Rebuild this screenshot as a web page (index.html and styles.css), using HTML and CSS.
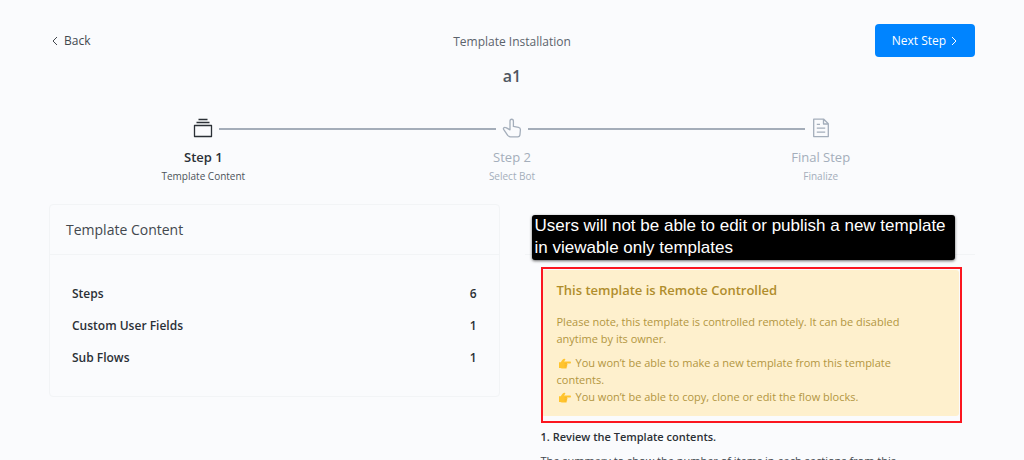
FILE: index.html
```html
<!DOCTYPE html>
<html lang="en">
<head>
<meta charset="utf-8">
<title>Template Installation</title>
<link rel="stylesheet" href="styles.css">
</head>
<body>
<svg class="defs" aria-hidden="true">
  <symbol id="point" viewBox="0 0 12 12">
    <path fill="#ffc42e" d="M0 4.2h1.8C2.8 2.4 4.2 1 5.4.8c.9-.1 1.2.8.6 1.5L5 3.5h6c1.300 0 1.300 2 0 2H7.800c1 .3.9 1.700 0 1.800.8.4.6 1.600-.3 1.700.5.7.1 1.600-.8 1.600H3.600C2.500 10.600 2 9.900 0 9.900z"/>
    <path fill="none" stroke="#e99a1f" stroke-width=".3" d="M7.800 5.600H5.600M7.800 7.300H5.600M7.400 9H5.600"/>
  </symbol>
</svg>
<main class="page">
  <header class="top">
    <a class="back" href="#"><svg class="chevron" viewBox="0 0 8 10"><path d="M6 1 2 5l4 4"/></svg>Back</a>
    <div class="heading">
      <p class="eyebrow">Template Installation</p>
      <h1 class="name">a1</h1>
    </div>
    <button class="next" type="button">Next Step<svg class="chevron" viewBox="0 0 8 10"><path d="m2 1 4 4-4 4"/></svg></button>
  </header>

  <ol class="steps">
    <li class="step current">
      <svg class="step-icon" viewBox="0 0 20 20"><path d="M1.500 7.500h17v11h-17zM3.500 4.500h13M5.500 1.500h9"/></svg>
      <span class="step-name">Step 1</span>
      <span class="step-note">Template Content</span>
    </li>
    <li class="step">
      <svg class="step-icon" viewBox="0 0 20 20"><path d="M8 11.800V3.200C8 .6 11.400.6 11.400 3.200v5.200l5.100.9c1.500.3 2 1.100 1.900 2.400l-.4 4.800c-.1 1.400-.9 2.300-2.300 2.300H8.500c-1.200 0-2-.4-2.800-1.400l-3.900-5.700c-1.100-1.700.6-3 2.200-2z"/></svg>
      <span class="step-name">Step 2</span>
      <span class="step-note">Select Bot</span>
    </li>
    <li class="step">
      <svg class="step-icon" viewBox="0 0 20 20"><path d="M2.700 1.200h10.100l4.500 4.500v12.900H2.700zM12.500 1.500v4.500H17M5.800 6.300H9M5.800 10.200h8.400M5.800 14.200h8.400"/></svg>
      <span class="step-name">Final Step</span>
      <span class="step-note">Finalize</span>
    </li>
  </ol>

  <div class="columns">
    <section class="card">
      <h2 class="card-title">Template Content</h2>
      <dl class="counts">
        <div class="count"><dt>Steps</dt><dd>6</dd></div>
        <div class="count"><dt>Custom User Fields</dt><dd>1</dd></div>
        <div class="count"><dt>Sub Flows</dt><dd>1</dd></div>
      </dl>
    </section>

    <section class="guide">
      <div class="guide-head"></div>
      <p class="callout">Users will not be able to edit or publish a new template in viewable only templates</p>
      <div class="guide-body">
        <div class="notice">
          <h3 class="notice-title">This template is Remote Controlled</h3>
          <p class="notice-lead">Please note, this template is controlled remotely. It can be disabled anytime by its owner.</p>
          <p class="notice-item"><svg class="hand" role="img" aria-label="Note"><use href="#point"/></svg>You won’t be able to make a new template from this template contents.</p>
          <p class="notice-item"><svg class="hand" role="img" aria-label="Note"><use href="#point"/></svg>You won’t be able to copy, clone or edit the flow blocks.</p>
          <span class="marker"></span>
        </div>
        <h3 class="guide-title">1. Review the Template contents.</h3>
        <p class="guide-text">The summary to show the number of items in each sections from this</p>
      </div>
    </section>
  </div>
</main>
</body>
</html>
```
FILE: styles.css
```css
* { box-sizing: border-box; }
body, h1, h2, h3, p, ol, dl, dd { margin: 0; padding: 0; }
body {
  height: 100vh;
  overflow: hidden;
  background: #fafbfd;
  color: #2b3036;
  font-family: "Open Sans", "Noto Sans", sans-serif;
  font-size: 12px;
  line-height: 17px;
}
.defs { position: absolute; width: 0; height: 0; }
.page { padding: 24px 49px 0; }

.top {
  display: grid;
  grid-template-columns: 1fr auto 1fr;
  align-items: start;
}
.back {
  display: flex;
  align-items: center;
  gap: 5px;
  padding: 8px 2px;
  color: #43484e;
  text-decoration: none;
}
.chevron {
  width: 8px;
  height: 10px;
  fill: none;
  stroke: currentColor;
  stroke-width: 1;
}
.heading { padding-top: 9px; text-align: center; }
.eyebrow { color: #5b636c; }
.name {
  margin-top: 14px;
  color: #4f565f;
  font-size: 16px;
  font-weight: 600;
  line-height: 24px;
}
.next {
  display: flex;
  align-items: center;
  justify-content: center;
  gap: 4px;
  justify-self: end;
  width: 100px;
  height: 33px;
  padding: 0;
  border: 0;
  border-radius: 4px;
  background: #0084ff;
  color: #fff;
  font: inherit;
}

.steps {
  display: grid;
  grid-template-columns: repeat(3, 1fr);
  margin-top: 30px;
  list-style: none;
}
.step {
  position: relative;
  display: flex;
  flex-direction: column;
  align-items: center;
  color: #a4aebb;
}
.step + .step::before {
  content: "";
  position: absolute;
  top: 10px;
  right: calc(50% + 16px);
  width: calc(100% - 32px);
  height: 2px;
  background: #a4adb9;
}
.step-icon {
  width: 20px;
  height: 20px;
  fill: none;
  stroke: currentColor;
  stroke-width: 1.300;
  stroke-linejoin: round;
}
.step-name { margin-top: 10px; font-size: 13px; line-height: 18px; }
.step-note { margin-top: 2px; font-size: 10px; }
.current { color: #2b3036; }
.current .step-name { font-weight: 600; }
.current .step-note { color: #4d535a; }

.columns {
  display: grid;
  grid-template-columns: 1fr 1fr;
  align-items: start;
  gap: 25px;
  margin-top: 19px;
}
.card { border: 1px solid #f2f4f6; border-radius: 4px; }
.card-title {
  padding: 16px 16px 15px;
  border-bottom: 1px solid #f2f4f6;
  color: #43484e;
  font-size: 14px;
  font-weight: 400;
  line-height: 18px;
}
.counts { padding: 23px 22px 22px; }
.count {
  display: flex;
  justify-content: space-between;
  font-weight: 600;
  line-height: 32px;
}

.guide { position: relative; font-size: 11px; }
.guide-head { height: 51px; border-bottom: 1px solid #f2f4f6; }
.callout {
  position: absolute;
  z-index: 2;
  top: 11px;
  left: 7px;
  right: 20px;
  padding: 0 4px 1px 3px;
  border-radius: 3px;
  background: #000;
  box-shadow: 0 1px 3px rgba(0, 0, 0, .6);
  color: #fff;
  font-family: "Liberation Sans", Arial, sans-serif;
  font-size: 17px;
  line-height: 22px;
}
.guide-body { padding: 15px 16px 0; }
.notice {
  position: relative;
  padding: 11px 32px 11px 16px;
  border-radius: 3px;
  background: #fef0cd;
  color: #b3963f;
}
.notice-title {
  margin-bottom: 14px;
  color: #b08d2c;
  font-size: 13px;
  font-weight: 600;
  line-height: 18px;
}
.notice-lead { margin-bottom: 7px; }
.hand {
  width: 12px;
  height: 12px;
  margin: 0 5px 0 2px;
  vertical-align: -3px;
}
.marker {
  position: absolute;
  inset: -3px -3px -7px 0;
  border: 2px solid #fb1620;
}
.guide-title {
  margin-top: 12px;
  font-size: 11px;
  font-weight: 600;
  line-height: 17px;
}
.guide-text { margin-top: 7px; color: #43484e; }
```
